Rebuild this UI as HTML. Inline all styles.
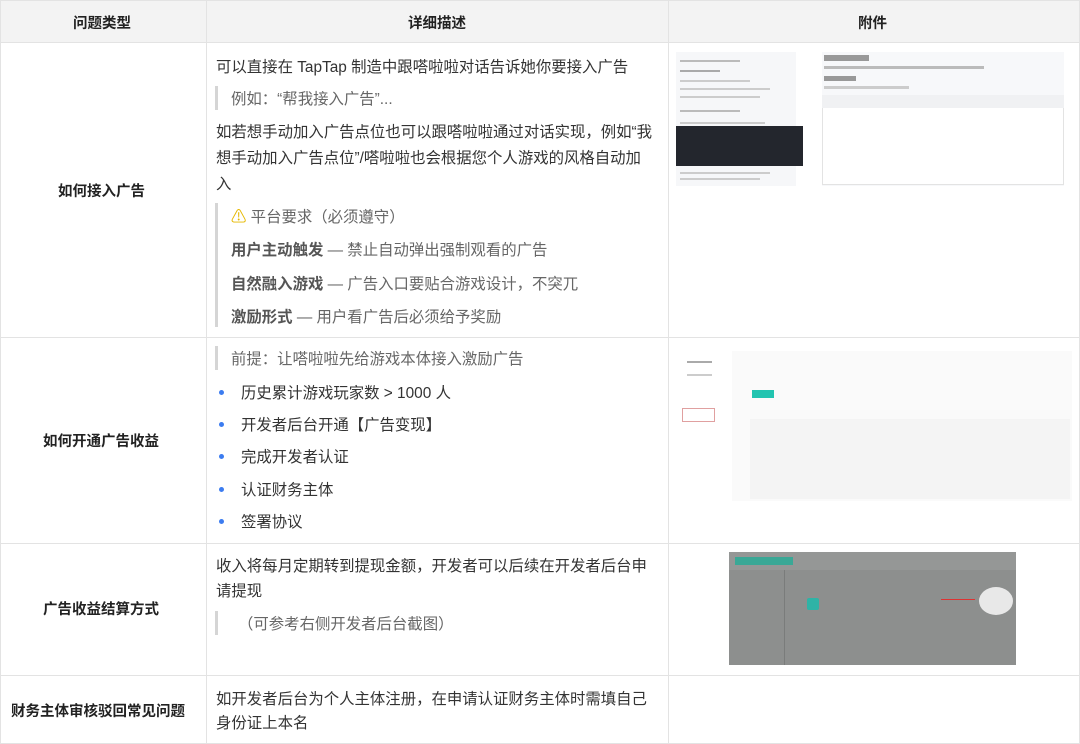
<!DOCTYPE html>
<html><head><meta charset="utf-8"><style>
*{margin:0;padding:0;box-sizing:border-box}
body{width:1080px;height:744px;background:#fff;font-family:"Liberation Sans","Noto Sans CJK SC",sans-serif;color:#333;font-size:15.4px;position:relative;overflow:hidden}
.a{position:absolute;white-space:nowrap}
.hl{position:absolute;left:0;width:1080px;height:1px;background:#e3e3e3}
.vl{position:absolute;top:0;width:1px;height:744px;background:#e3e3e3}
.h{font-weight:bold;font-size:14.5px;color:#222}
.bq{position:absolute;width:3px;background:#d5d5d5}
.g{color:#666}
.b{font-weight:bold;color:#555}
.dot{position:absolute;width:5px;height:5px;border-radius:50%;background:#3c7cf0}
</style></head><body>
<div style="position:absolute;left:0;top:0;width:1080px;height:42px;background:#f3f3f3"></div>
<div class="hl" style="top:0"></div><div class="hl" style="top:42px"></div><div class="hl" style="top:337px"></div><div class="hl" style="top:543px"></div><div class="hl" style="top:675px"></div><div class="hl" style="top:743px"></div>
<div class="vl" style="left:0"></div><div class="vl" style="left:206px"></div><div class="vl" style="left:668px"></div><div class="vl" style="left:1079px"></div>

<div class="a h" style="left:73px;top:12px">问题类型</div>
<div class="a h" style="left:408px;top:12px">详细描述</div>
<div class="a h" style="left:858px;top:12px">附件</div>

<div class="a h" style="left:58px;top:180px">如何接入广告</div>
<div class="a h" style="left:43px;top:430px">如何开通广告收益</div>
<div class="a h" style="left:43px;top:598px">广告收益结算方式</div>
<div class="a h" style="left:11px;top:700px">财务主体审核驳回常见问题</div>

<div class="a" style="left:216px;top:55px">可以直接在 TapTap 制造中跟嗒啦啦对话告诉她你要接入广告</div>
<div class="bq" style="left:215px;top:86px;height:24px"></div>
<div class="a g" style="left:231px;top:87px">例如：“帮我接入广告”...</div>
<div class="a" style="left:216px;top:120px">如若想手动加入广告点位也可以跟嗒啦啦通过对话实现，例如“我</div>
<div class="a" style="left:216px;top:146px">想手动加入广告点位”/嗒啦啦也会根据您个人游戏的风格自动加</div>
<div class="a" style="left:216px;top:172px">入</div>
<div class="bq" style="left:215px;top:203px;height:124px"></div>
<div class="a g" style="left:231px;top:205px"><span style="color:#e6b800">⚠</span> 平台要求（必须遵守）</div>
<div class="a g" style="left:231px;top:238px"><span class="b">用户主动触发</span> — 禁止自动弹出强制观看的广告</div>
<div class="a g" style="left:231px;top:272px"><span class="b">自然融入游戏</span> — 广告入口要贴合游戏设计，不突兀</div>
<div class="a g" style="left:231px;top:305px"><span class="b">激励形式</span> — 用户看广告后必须给予奖励</div>

<div class="bq" style="left:215px;top:346px;height:24px"></div>
<div class="a g" style="left:231px;top:347px">前提：让嗒啦啦先给游戏本体接入激励广告</div>
<div class="dot" style="left:219px;top:390px"></div><div class="a" style="left:241px;top:381px">历史累计游戏玩家数 &gt; 1000 人</div>
<div class="dot" style="left:219px;top:422px"></div><div class="a" style="left:241px;top:413px">开发者后台开通【广告变现】</div>
<div class="dot" style="left:219px;top:454px"></div><div class="a" style="left:241px;top:445px">完成开发者认证</div>
<div class="dot" style="left:219px;top:487px"></div><div class="a" style="left:241px;top:478px">认证财务主体</div>
<div class="dot" style="left:219px;top:519px"></div><div class="a" style="left:241px;top:510px">签署协议</div>

<div class="a" style="left:216px;top:554px">收入将每月定期转到提现金额，开发者可以后续在开发者后台申</div>
<div class="a" style="left:216px;top:579px">请提现</div>
<div class="bq" style="left:215px;top:611px;height:24px"></div>
<div class="a g" style="left:238px;top:612px">（可参考右侧开发者后台截图）</div>

<div class="a" style="left:216px;top:687px">如开发者后台为个人主体注册，在申请认证财务主体时需填自己</div>
<div class="a" style="left:216px;top:711px">身份证上本名</div>

<!-- attachments -->
<div style="position:absolute;left:676px;top:52px;width:120px;height:134px;background:#f6f7f9">
 <div style="position:absolute;left:4px;top:8px;width:60px;height:2px;background:#bbb"></div>
 <div style="position:absolute;left:4px;top:18px;width:40px;height:2px;background:#aaa"></div>
 <div style="position:absolute;left:4px;top:28px;width:70px;height:2px;background:#ccc"></div>
 <div style="position:absolute;left:4px;top:36px;width:90px;height:2px;background:#ccc"></div>
 <div style="position:absolute;left:4px;top:44px;width:80px;height:2px;background:#ccc"></div>
 <div style="position:absolute;left:4px;top:58px;width:60px;height:2px;background:#bbb"></div>
 <div style="position:absolute;left:4px;top:70px;width:85px;height:2px;background:#ccc"></div>
 <div style="position:absolute;left:0;top:74px;width:127px;height:40px;background:#23262d"></div>
 <div style="position:absolute;left:4px;top:120px;width:90px;height:2px;background:#ccc"></div>
 <div style="position:absolute;left:4px;top:126px;width:80px;height:2px;background:#ccc"></div>
</div>
<div style="position:absolute;left:822px;top:52px;width:242px;height:134px;background:#f7f8fa">
 <div style="position:absolute;left:2px;top:3px;width:45px;height:6px;background:#999"></div>
 <div style="position:absolute;left:2px;top:14px;width:160px;height:3px;background:#bbb"></div>
 <div style="position:absolute;left:2px;top:24px;width:32px;height:5px;background:#999"></div>
 <div style="position:absolute;left:2px;top:34px;width:85px;height:3px;background:#ccc"></div>
 <div style="position:absolute;left:0;top:43px;width:242px;height:90px;background:#fff;border:1px solid #e3e3e3"></div>
 <div style="position:absolute;left:0;top:43px;width:242px;height:13px;background:#f0f1f3"></div>
</div>
<div style="position:absolute;left:672px;top:341px;width:404px;height:200px;background:#fff">
 <div style="position:absolute;left:60px;top:10px;width:340px;height:150px;background:#fafafa"></div>
 <div style="position:absolute;left:80px;top:49px;width:22px;height:8px;background:#22c4b0"></div>
 <div style="position:absolute;left:78px;top:78px;width:320px;height:80px;background:#f4f4f4"></div>
 <div style="position:absolute;left:10px;top:67px;width:33px;height:14px;border:1px solid #e0a0a0"></div>
 <div style="position:absolute;left:15px;top:20px;width:25px;height:2px;background:#aaa"></div>
 <div style="position:absolute;left:15px;top:33px;width:25px;height:2px;background:#ccc"></div>
</div>
<div style="position:absolute;left:729px;top:552px;width:287px;height:113px;background:#8d8f8e">
 <div style="position:absolute;left:0;top:0;width:287px;height:18px;background:#959796"></div>
 <div style="position:absolute;left:6px;top:5px;width:58px;height:8px;background:#3aa896"></div>
 <div style="position:absolute;left:55px;top:18px;width:1px;height:95px;background:#7a7c7b"></div>
 <div style="position:absolute;left:78px;top:46px;width:12px;height:12px;background:#2fb3a6;border-radius:2px"></div>
 <div style="position:absolute;left:250px;top:35px;width:34px;height:28px;border-radius:50%;background:#e8e8e8"></div>
 <div style="position:absolute;left:212px;top:47px;width:34px;height:1px;background:#d33"></div>
</div>
</body></html>
